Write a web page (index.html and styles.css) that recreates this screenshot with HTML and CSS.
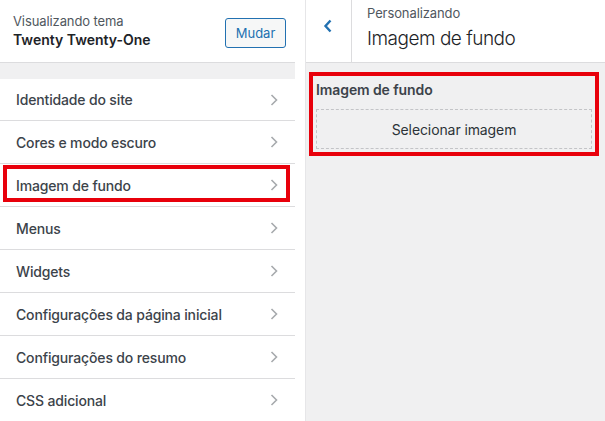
FILE: index.html
```html
<!DOCTYPE html>
<html lang="pt-BR">
<head>
<meta charset="utf-8">
<title>Personalizar</title>
<link rel="stylesheet" href="styles.css">
</head>
<body>
<div class="page">
  <aside class="left">
    <header class="theme-head">
      <div class="theme-info">
        <div class="theme-label">Visualizando tema</div>
        <div class="theme-name">Twenty Twenty-One</div>
      </div>
      <button class="btn-change">Mudar</button>
    </header>
    <div class="strip"></div>
    <ul class="sections">
      <li class="section"><span>Identidade do site</span><svg class="chev" viewBox="0 0 8 12"><path d="M1.5 1 L6.5 6 L1.5 11"/></svg></li>
      <li class="section"><span>Cores e modo escuro</span><svg class="chev" viewBox="0 0 8 12"><path d="M1.5 1 L6.5 6 L1.5 11"/></svg></li>
      <li class="section highlighted"><span>Imagem de fundo</span><svg class="chev" viewBox="0 0 8 12"><path d="M1.5 1 L6.5 6 L1.5 11"/></svg></li>
      <li class="section"><span>Menus</span><svg class="chev" viewBox="0 0 8 12"><path d="M1.5 1 L6.5 6 L1.5 11"/></svg></li>
      <li class="section"><span>Widgets</span><svg class="chev" viewBox="0 0 8 12"><path d="M1.5 1 L6.5 6 L1.5 11"/></svg></li>
      <li class="section"><span>Configurações da página inicial</span><svg class="chev" viewBox="0 0 8 12"><path d="M1.5 1 L6.5 6 L1.5 11"/></svg></li>
      <li class="section"><span>Configurações do resumo</span><svg class="chev" viewBox="0 0 8 12"><path d="M1.5 1 L6.5 6 L1.5 11"/></svg></li>
      <li class="section"><span>CSS adicional</span><svg class="chev" viewBox="0 0 8 12"><path d="M1.5 1 L6.5 6 L1.5 11"/></svg></li>
    </ul>
  </aside>
  <div class="spacer"></div>
  <main class="right">
    <header class="panel-head">
      <button class="back" aria-label="Voltar"><svg viewBox="0 0 10 14"><path d="M7.5 1.5 L2.5 7 L7.5 12.5"/></svg></button>
      <div class="panel-titles">
        <div class="panel-crumb">Personalizando</div>
        <div class="panel-title">Imagem de fundo</div>
      </div>
    </header>
    <section class="control highlighted">
      <div class="control-title">Imagem de fundo</div>
      <button class="select-img">Selecionar imagem</button>
    </section>
  </main>
</div>
</body>
</html>
```
FILE: styles.css
```css
* { box-sizing: border-box; }
html, body { margin: 0; padding: 0; }
body {
  font-family: Inter, "Noto Sans", sans-serif;
  color: #3c434a;
  background: #fff;
  width: 605px;
  height: 421px;
  overflow: hidden;
}
.page { display: flex; height: 421px; }
.left { width: 295px; background: #fff; flex: none; }
.spacer { width: 10px; flex: none; background: #fff; }
.right { flex: 1; background: #f0f0f1; border-left: 1px solid #e6e6e8; }

.theme-head {
  height: 63px;
  display: flex;
  align-items: center;
  justify-content: space-between;
  padding: 0 9px 0 13px;
  border-bottom: 1px solid #dcdcde;
}
.theme-label { font-size: 13px; color: #50575e; line-height: 17px; letter-spacing: -0.1px; }
.theme-name { font-size: 14px; font-weight: 600; color: #1d2327; line-height: 18px; margin-top: 1px; }
.btn-change {
  width: 61px; height: 30px;
  border: 1px solid #2271b1;
  border-radius: 3px;
  background: #f6f7f7;
  color: #2271b1;
  font: 13px Inter, sans-serif;
  padding: 0;
  margin-top: 3px;
}
.strip { height: 16px; background: #f0f0f1; }

.sections { list-style: none; margin: 0; padding: 0; }
.section {
  position: relative;
  height: 43px;
  display: flex;
  align-items: center;
  justify-content: space-between;
  padding: 0 17px 0 16px;
  border-bottom: 1px solid #dcdcde;
  font-size: 14px;
  font-weight: 500;
  color: #3c434a;
  letter-spacing: -0.15px;
}
.section:first-child { height: 42px; }
.chev { width: 8px; height: 12px; fill: none; stroke: #a7aaad; stroke-width: 1.6; }
.section.highlighted::after {
  content: "";
  position: absolute;
  left: 3px; right: 5px; top: 1px; bottom: 4px;
  border: 4px solid #e8000b;
}

.panel-head {
  height: 63px;
  display: flex;
  background: #fff;
  border-bottom: 1px solid #dcdcde;
}
.back {
  width: 46px;
  border: 0;
  border-right: 1px solid #dcdcde;
  background: #fff;
  padding: 0 2px 10px 0;
  display: flex;
  align-items: center;
  justify-content: center;
}
.back svg { width: 10px; height: 14px; fill: none; stroke: #2271b1; stroke-width: 2.4; }
.panel-titles { padding: 5px 0 0 15px; }
.panel-crumb { font-size: 13px; color: #50575e; line-height: 16px; letter-spacing: -0.1px; }
.panel-title { font-size: 19px; font-weight: 300; color: #1d2327; line-height: 24px; margin-top: 6px; letter-spacing: -0.5px; }

.control {
  position: relative;
  margin: 9px 6px 0 3px;
  padding: 8px 7px 9px 7px;
  height: 84px;
}
.control.highlighted::after {
  content: "";
  position: absolute;
  inset: 0;
  border: 4px solid #e8000b;
}
.control-title { font-size: 14px; font-weight: 600; color: #3c434a; line-height: 20px; letter-spacing: -0.1px; }
.select-img {
  display: block;
  width: 276px;
  height: 40px;
  margin-top: 9px;
  border: 1px dashed #c3c4c7;
  background: transparent;
  font: 14px Inter, sans-serif;
  color: #2c3338;
  padding: 0;
  letter-spacing: -0.1px;
}
```
